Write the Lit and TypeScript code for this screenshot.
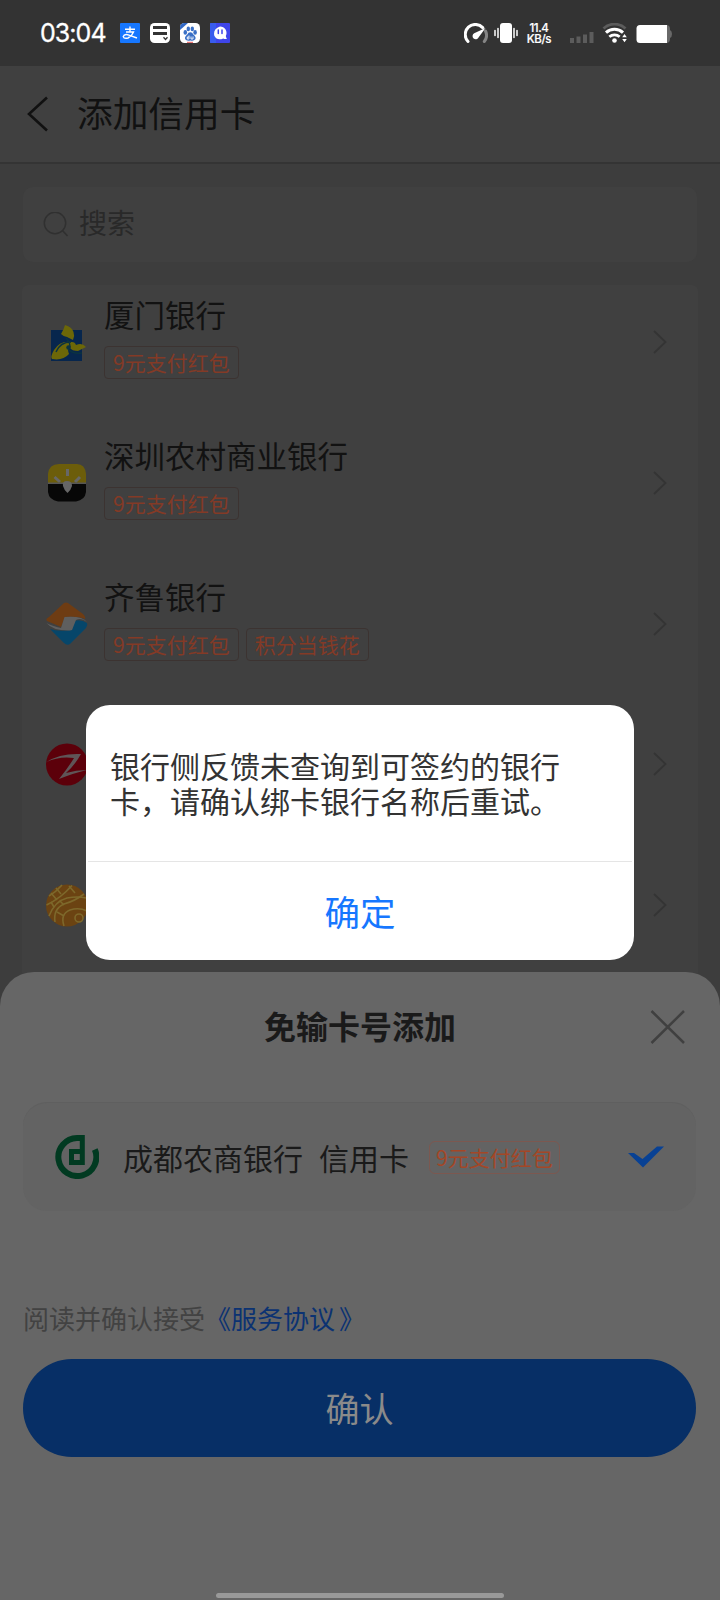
import { LitElement, html, css, svg } from "lit";
import { customElement } from "lit/decorators.js";

interface Bank {
  name: string;
  tags: string[];
  logo: unknown;
}

const xiamen = svg`
  <rect x="3" y="8" width="31" height="31" fill="#07264d"/>
  <path d="M13 12 Q16 7 17 3 Q24 5 25.500 10 Q27 14 25 18 L19 15 Q16 15 13 12Z" fill="#6c6708"/>
  <path d="M24 20 Q12 18 6 28 Q2 35 4 37 Q15 39 21 32 Q19 27 21.500 25.500 Q24 29 30 29 L38 25 Q34 20 28 23 Q27 20 24 20Z" fill="#6c6708"/>
  <path d="M23 20 Q12 20 8 30 M18 16 Q22 20 22 25" fill="none" stroke="#0b3340" stroke-width="1.400"/>
  <path d="M21 28 Q25 32 34 31" fill="none" stroke="#0b3340" stroke-width="1.600"/>
  <circle cx="20.500" cy="25.500" r="2.200" fill="#0b3340"/>`;

const shenzhen = svg`
  <path d="M11 1 H29 Q37 1 38 11 V20 H0 V11 Q1 1 11 1Z" fill="#6c5d0a"/>
  <path d="M0 21 H38 V29 Q37 37 28 38.500 H10 Q1 37 0 29Z" fill="#070707"/>
  <path d="M19.500 6 V13 M6.500 14 L12 19 M32 14 L27 19" stroke="#676767" stroke-width="3" fill="none"/>
  <path d="M0 20.300 H38" stroke="#565656" stroke-width="1.500"/>
  <path d="M19 18 Q24 18 24 23 Q23 27 19.500 30 Q16 27 15 23 Q14 18 19 18Z" fill="#666"/>`;

const qilu = svg`
  <path d="M16 0 Q18 -1 20 0 L35 11 Q38 14 37 16 Q30 13 17 14 L13 24 L-1 18 Q-3 16 1 14Z" fill="#6e3c13"/>
  <path d="M26 18 Q33 16 39 20 Q40 22 38 25 L22 41 Q19 43 16 40 L2 26 Q10 29 24 27Z" fill="#06466a"/>
  <path d="M-1.500 20 Q5 28 22 27.500 L24 27 L28 17 Q33 14 39 19 Q34 12.500 16.500 14 L13 25 Q4 23 -1.500 20Z" fill="#5f5f5f"/>`;

const red = svg`
  <circle cx="19" cy="20.500" r="21" fill="#5c000a"/>
  <path d="M-1.500 18 Q12 9 33 10 Q27 21 18 29 Q28 26 39 26 Q26 29 11 35 Q20 24 26 14 Q11 12 -1.500 18Z" fill="#5f5557"/>`;

const gold = svg`
  <circle cx="19" cy="20.500" r="21" fill="#6b4312"/>
  <g fill="none" stroke="#7d682b" stroke-width="1.600">
    <path d="M1 11 Q8 7 14 0 M-1.500 20 Q13 13 24 0.500 M1 31 Q7 16 19 13 Q30 11 38 13"/>
    <path d="M7 37 Q5 24 16 19 Q27 16 36 9 M16 41 Q12 29 22 25 Q31 22 39 26"/>
    <path d="M8 3 L13 9 M3 8 L9 15 M21 1 L27 8 M3 17 L6 22 M12 16 L16 20 M9 27 L16 31"/>
    <circle cx="31" cy="33" r="4"/>
  </g>`;

const RED_PACKET = "9元支付红包";

const BANKS: Bank[] = [
  { name: "厦门银行", tags: [RED_PACKET], logo: xiamen },
  { name: "深圳农村商业银行", tags: [RED_PACKET], logo: shenzhen },
  { name: "齐鲁银行", tags: [RED_PACKET, "积分当钱花"], logo: qilu },
  { name: "", tags: [], logo: red },
  { name: "", tags: [], logo: gold },
];

const FONT = css`"Noto Sans CJK SC", "Noto Sans", sans-serif`;

@customElement("status-bar")
class StatusBar extends LitElement {
  static styles = css`
    :host {
      display: flex;
      align-items: center;
      height: 66px;
      padding: 0 48px 0 40px;
      box-sizing: border-box;
      background: #333;
      color: #fff;
      font-family: Inter, "Noto Sans", sans-serif;
    }
    svg { display: block; flex: none; }
    .clock { width: 80px; font-size: 25px; line-height: 30px; letter-spacing: -0.950px; font-weight: 400; -webkit-text-stroke: 0.3px #fff; }
    .apps { display: flex; gap: 10px; }
    .grow { flex: 1; }
    .rate { width: 26px; margin-left: 8px; font-size: 11.500px; font-weight: 500; line-height: 11px; text-align: center; white-space: nowrap; letter-spacing: -0.400px; padding-top: 1px; -webkit-text-stroke: 0.2px #fff; }
    .vibrate { margin-left: 6px; }
    .signal { margin-left: 18px; }
    .wifi { margin-left: 8px; }
    .battery { margin-left: 8px; }
  `;
  render() {
    return html`
      <span class="clock">03:04</span>
      <div class="apps">
        <svg width="20" height="20" viewBox="0 0 20 20">
          <rect width="20" height="20" rx="1" fill="#1677ff"/>
          <path d="M5 6.300 H15 M10 3.500 V9 M6 9 H13.500 Q12 13 8 15 Q4 16 3.200 13.600 Q4 11 7.500 11.700 L17 15" fill="none" stroke="#fff" stroke-width="1.400"/>
        </svg>
        <svg width="20" height="20" viewBox="0 0 20 20">
          <rect width="20" height="20" rx="4.500" fill="#fff"/>
          <path d="M3 4.500 H17 M3 10.500 H17" stroke="#333" stroke-width="3"/>
          <path d="M13.500 14.300 L15.500 16.500 L17.500 14.300" fill="none" stroke="#333" stroke-width="1.300"/>
        </svg>
        <svg width="20" height="20" viewBox="0 0 20 20">
          <rect width="20" height="20" rx="4.500" fill="#fff"/>
          <path d="M0 7 V4.500 Q0 0 4.500 0 H8Z" fill="#2f67c4"/>
          <g fill="#3a70c6">
            <ellipse cx="5.300" cy="9.400" rx="1.800" ry="2.300"/><ellipse cx="8.300" cy="5.900" rx="1.700" ry="2.300"/>
            <ellipse cx="12.300" cy="5.900" rx="1.700" ry="2.300"/><ellipse cx="15.100" cy="9.400" rx="1.800" ry="2.300"/>
            <path d="M10.300 9.200 Q12.500 9.200 13.300 11.400 Q16.500 13.700 15.300 16.300 Q14 18.300 10.300 17.500 Q6.500 18.300 5.200 16.300 Q4.200 13.700 7.300 11.400 Q8.100 9.200 10.300 9.200Z"/>
          </g>
          <path d="M9 12.500 V16 H7.300 V14 H9 M11 13.500 V16 H13 V13.500" fill="none" stroke="#fff" stroke-width="0.900"/>
          <path d="M7 19.300 H13" stroke="#e05050" stroke-width="1"/>
        </svg>
        <svg width="20" height="20" viewBox="0 0 20 20">
          <rect width="20" height="20" rx="1" fill="#3f45ea"/>
          <rect width="6" height="20" fill="#356cf0" opacity=".6"/>
          <path d="M10 3.500 A6.500 6.500 0 0 1 15.800 13 Q16.200 15 17 15.600 Q15 16.700 13.300 15.400 Q7 18 4.300 12.700 Q2.800 6 10 3.500Z" fill="#fff"/>
          <path d="M8.300 7 V10.500 M12 7 V10.500" stroke="#3f45ea" stroke-width="1.500" stroke-linecap="round"/>
        </svg>
      </div>
      <span class="grow"></span>
      <svg width="24" height="20" viewBox="0 0 24 20">
        <path d="M4 18.500 A10 10 0 0 1 18.700 4.600" fill="none" stroke="#fff" stroke-width="3" stroke-linecap="round"/>
        <path d="M21.500 8 A10 10 0 0 1 20.300 18.500" fill="none" stroke="#858585" stroke-width="3" stroke-linecap="round"/>
        <path d="M21.500 5 L14.700 14.300 A3.200 3.200 0 1 1 10.200 10.300Z" fill="#fff"/>
      </svg>
      <svg class="vibrate" width="24" height="20" viewBox="0 0 24 20">
        <rect x="6" width="12" height="20" rx="3" fill="#fff"/>
        <path d="M1 7.500 V12.500 M4 5.500 V14.500 M20 5.500 V14.500 M23 7.500 V12.500" stroke="#fff" stroke-width="1.500" stroke-linecap="round"/>
      </svg>
      <span class="rate">11.4<br/>KB/s</span>
      <svg class="signal" width="24" height="20" viewBox="0 0 24 20">
        <path d="M0 15h4v5h-4z M6.500 13.500h4v6.500h-4z M13 11.500h4v8.500h-4z M19.500 9h4v11h-4z" fill="#5c5c5c"/>
      </svg>
      <svg class="wifi" width="26" height="20" viewBox="0 0 26 20">
        <path d="M1.500 5.500 A16 16 0 0 1 23.500 5.500" fill="none" stroke="#5c5c5c" stroke-width="2.800"/>
        <path d="M4 9.600 A12.500 12.500 0 0 1 21 9.600" fill="none" stroke="#fff" stroke-width="3"/>
        <path d="M7.300 13.800 A8 8 0 0 1 17.700 13.800" fill="none" stroke="#fff" stroke-width="2.700"/>
        <circle cx="12.500" cy="17.500" r="2.300" fill="#fff"/>
        <path d="M20.200 14.300 L22.500 11 L24.800 14.300Z M20.200 16 L22.500 19.200 L24.800 16Z" fill="#fff"/>
      </svg>
      <svg class="battery" width="36" height="20" viewBox="0 0 36 20">
        <path d="M31 2 Q34 2.500 34 6 V7 Q36 8 36 11 Q36 14 34 15 V16 Q34 19.500 31 20Z" fill="#696969"/>
        <path d="M4 2 H31 V20 H4 Q0.500 20 0.500 16.500 V5.500 Q0.500 2 4 2Z" fill="#fff"/>
      </svg>`;
  }
}

@customElement("bank-row")
class BankRow extends LitElement {
  static properties = { bank: { attribute: false } };
  declare bank: Bank;
  static styles = css`
    :host {
      display: flex;
      align-items: center;
      height: 140.700px;
      padding-left: 26px;
      padding-right: 30px;
      box-sizing: border-box;
      font-family: ${FONT};
    }
    svg { display: block; flex: none; overflow: visible; }
    .info { flex: 1; padding-left: 16px; height: 84px; margin-bottom: 10px; display: flex; flex-direction: column; justify-content: space-between; }
    .name { font-size: 30.500px; line-height: 38px; color: #121212; }
    .tags { display: flex; gap: 7px; }
    .tag { box-sizing: border-box; height: 33px; padding: 0 8px; border: 1px solid #3c3331; border-radius: 4px; font-size: 21px; line-height: 30px; color: #843a26; }
  `;
  render() {
    const { name, tags, logo } = this.bank;
    return html`
      <svg width="40" height="41" viewBox="0 0 40 41">${logo}</svg>
      <div class="info">
        <span class="name">${name}</span>
        <div class="tags">${tags.map((t) => html`<span class="tag">${t}</span>`)}</div>
      </div>
      <svg width="16" height="24" viewBox="0 0 16 24">
        <path d="M2 1 L13.500 12 L2 23" fill="none" stroke="#343434" stroke-width="1.800"/>
      </svg>`;
  }
}

@customElement("app-root")
class AppRoot extends LitElement {
  static styles = css`
    :host {
      display: block;
      position: relative;
      width: 720px;
      height: 1600px;
      overflow: hidden;
      background: #3d3d3d;
      font-family: ${FONT};
    }
    svg { display: block; flex: none; }
    .header { display: flex; align-items: center; height: 98px; box-sizing: border-box; padding: 0 26px; gap: 28px; background: #404040; border-bottom: 2px solid #343434; }
    .heading { font-size: 35.700px; line-height: 48px; color: #111; padding-bottom: 4px; }
    .search { display: flex; align-items: center; gap: 10px; height: 75px; margin: 23px 23px 0; padding: 0 20px; box-sizing: border-box; background: #404040; border-radius: 10px; font-size: 28px; line-height: 36px; color: #292929; }
    .search span { padding-bottom: 6px; }
    .list { display: flow-root; margin: 23px 22px 0; background: #404040; height: 760px; border-radius: 6px 6px 0 0; }
    .rows { margin-top: -13px; }
    .sheet { position: absolute; left: 0; right: 0; bottom: 0; height: 628px; box-sizing: border-box; padding: 0 24px 0 23px; border-radius: 34px 34px 0 0; background: #666; display: flex; flex-direction: column; }
    .sheet-head { display: grid; grid-template-columns: 36px 1fr 36px; align-items: center; height: 110px; margin-right: 10px; margin-left: 11px; }
    .sheet-title { grid-column: 2; text-align: center; font-size: 32px; line-height: 44px; font-weight: 600; color: #1a1a1a; padding-bottom: 4px; }
    .card { display: flex; align-items: center; height: 109px; margin-top: 20px; box-sizing: border-box; padding: 0 32px; border-radius: 24px; background: #636363; border-top: 1px solid #5f5f5f; }
    .card-name { margin-left: 24px; font-size: 30px; line-height: 40px; color: #1a1a1a; }
    .card-kind { margin-left: 16px; font-size: 30px; line-height: 40px; color: #1a1a1a; }
    .card-tag { margin-left: 20px; height: 33px; box-sizing: border-box; border: 1px solid #7c5850; border-radius: 6px; padding: 0 6px; font-size: 21px; line-height: 30px; color: #a34727; }
    .grow { flex: 1; }
    .terms { margin-top: 88px; font-size: 26px; line-height: 38px; color: #424242; }
    .link { color: #0b3272; }
    .link-end { margin-left: 4px; }
    .confirm { margin-top: 22px; height: 98px; border-radius: 49px; background: #072f66; color: #8a8a8a; font-size: 34px; line-height: 98px; text-align: center; }
    .home { position: absolute; left: 216px; bottom: 2px; width: 288px; height: 5px; border-radius: 3px; background: #999; }
    .modal { position: absolute; left: 86px; top: 705px; width: 548px; height: 255px; box-sizing: border-box; border-radius: 24px; background: #fff; display: flex; flex-direction: column; }
    .message { flex: 1; padding: 43px 60px 0 24px; font-size: 30px; line-height: 35px; color: #333; }
    .ok { height: 99px; margin: 0 2px; box-sizing: border-box; border-top: 1px solid #e5e5e5; text-align: center; font-size: 35.500px; line-height: 97px; color: #1677ff; }
  `;
  render() {
    return html`
      <status-bar></status-bar>
      <div class="header">
        <svg width="23" height="36" viewBox="0 0 23 36">
          <path d="M21 1.500 L3 18 L21 34.500" fill="none" stroke="#111" stroke-width="2.600"/>
        </svg>
        <span class="heading">添加信用卡</span>
      </div>
      <div class="search">
        <svg width="26" height="26" viewBox="0 0 26 26">
          <circle cx="12" cy="11" r="10.700" fill="none" stroke="#303030" stroke-width="1.500"/>
          <path d="M19.500 18.500 L24.500 24" stroke="#303030" stroke-width="1.700"/>
        </svg>
        <span>搜索</span>
      </div>
      <div class="list">
        <div class="rows">${BANKS.map((b) => html`<bank-row .bank=${b}></bank-row>`)}</div>
      </div>
      <div class="sheet">
        <div class="sheet-head">
          <span class="sheet-title">免输卡号添加</span>
          <svg width="36" height="36" viewBox="0 0 36 36">
            <path d="M1.500 2 L34 34 M34 2 L1.500 34" fill="none" stroke="#404040" stroke-width="2.500"/>
          </svg>
        </div>
        <div class="card">
          <svg width="44" height="44" viewBox="0 0 44 44">
            <path d="M28.500 3 H22 A19 19 0 1 0 39.800 14.500" fill="none" stroke="#013a21" stroke-width="6"/>
            <path d="M27.300 0 V27.500 H16.500 V16.500 H27.300" fill="none" stroke="#013a21" stroke-width="5"/>
          </svg>
          <span class="card-name">成都农商银行</span>
          <span class="card-kind">信用卡</span>
          <span class="card-tag">9元支付红包</span>
          <span class="grow"></span>
          <svg width="36" height="22" viewBox="0 0 36 22">
            <path d="M0 7 H6 L14.500 13 L29 0.500 H36 L15 21.500Z" fill="#084194"/>
          </svg>
        </div>
        <div class="terms">阅读并确认接受<span class="link">《服务协议<span class="link-end">》</span></span></div>
        <div class="confirm">确认</div>
      </div>
      <div class="home"></div>
      <div class="modal">
        <div class="message">银行侧反馈未查询到可签约的银行卡，请确认绑卡银行名称后重试。</div>
        <div class="ok">确定</div>
      </div>`;
  }
}
